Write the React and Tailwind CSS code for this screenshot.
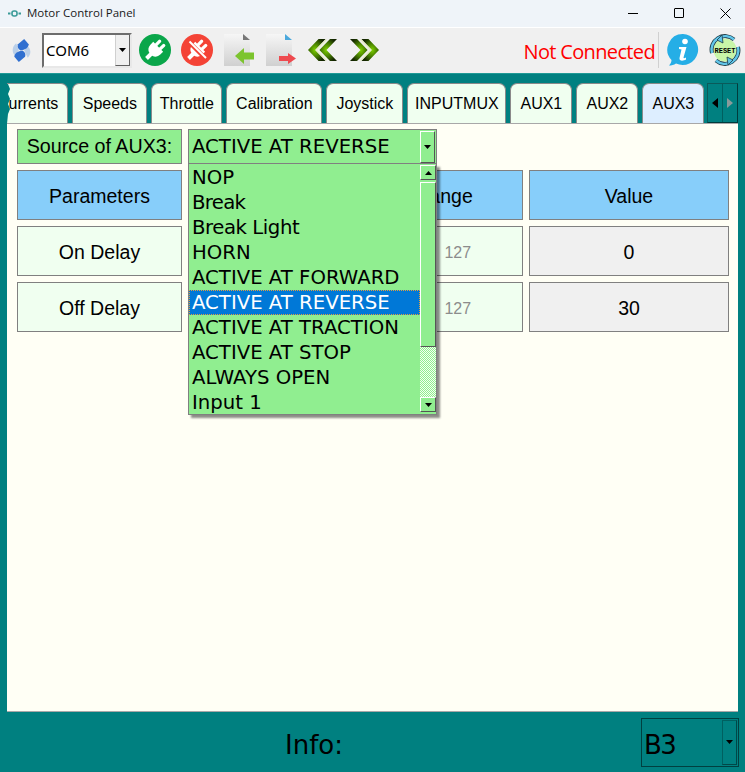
import React from 'react';

const OPTIONS = [
  { label: 'NOP' },
  { label: 'Break', tight: 'tracking-[-0.7px]' },
  { label: 'Break Light', tight: 'tracking-[-0.45px]' },
  { label: 'HORN' },
  { label: 'ACTIVE AT FORWARD' },
  { label: 'ACTIVE AT REVERSE', selected: true },
  { label: 'ACTIVE AT TRACTION' },
  { label: 'ACTIVE AT STOP' },
  { label: 'ALWAYS OPEN' },
  { label: 'Input 1' },
];

const TABS = [
  { name: 'Speeds', w: 'w-[75px]' },
  { name: 'Throttle', w: 'w-[71px]' },
  { name: 'Calibration', w: 'w-[96px]' },
  { name: 'Joystick', w: 'w-[77px]' },
  { name: 'INPUTMUX', w: 'w-[99px]' },
  { name: 'AUX1', w: 'w-[62px]' },
  { name: 'AUX2', w: 'w-[62px]' },
];

function Arrow({ up }) {
  return (
    <svg width="7" height="4" viewBox="0 0 7 4">
      <path d={up ? 'M3.5 0 L7 4 L0 4 Z' : 'M0 0 L7 0 L3.5 4 Z'} fill="#000" />
    </svg>
  );
}

function TitleIcon() {
  return (
    <svg width="13" height="7" viewBox="0 0 13 7" fill="none">
      <rect x="4" y="1" width="5" height="5" rx="2" stroke="#3a9a98" strokeWidth="1.6" />
      <rect x="0" y="2.5" width="2.5" height="2" fill="#3a9a98" />
      <rect x="10.5" y="2.5" width="2.5" height="2" fill="#3a9a98" />
    </svg>
  );
}

function Logo() {
  return (
    <svg width="21" height="25" viewBox="0 0 22 28">
      <path d="M5 6 C0 10 0 17 4 20 L8 14 Z" fill="#b9cfe9" />
      <path d="M17 8 C22 12 22 18 18 22 L14 14 Z" fill="#b9cfe9" />
      <path d="M14 1 L19 7 C19 11 15 13 10 14 C7 12 6 10 7 7 Z" fill="#2f6fd0" />
      <path d="M8 27 L3 21 C3 17 7 15 12 14 C15 16 16 18 15 21 Z" fill="#2f6fd0" />
    </svg>
  );
}

function PlugShape() {
  return (
    <g fill="#fff" transform="rotate(45 16 16)">
      <rect x="11.5" y="5" width="3.2" height="8" rx="1.4" />
      <rect x="17.3" y="5" width="3.2" height="8" rx="1.4" />
      <path d="M9 11.5 H23 V15.5 A7 7 0 0 1 18 22 V28 H14 V22 A7 7 0 0 1 9 15.5 Z" />
    </g>
  );
}

function PlugOn() {
  return (
    <svg width="32" height="32" viewBox="0 0 32 32">
      <circle cx="16" cy="16" r="16" fill="#0aa64a" />
      <PlugShape />
    </svg>
  );
}

function PlugOff() {
  return (
    <svg width="32" height="32" viewBox="0 0 32 32">
      <circle cx="16" cy="16" r="16" fill="#f44336" />
      <PlugShape />
      <path d="M8 8 L25 25" stroke="#f44336" strokeWidth="4.5" />
      <path d="M8.5 7.5 L25 24" stroke="#fff" strokeWidth="2" />
    </svg>
  );
}

function DocIcon({ id, corner, arrow }) {
  const isIn = id === 'in';
  return (
    <svg width="31" height="33" viewBox="0 0 31 33">
      <defs>
        <linearGradient id={`doc-${id}`} x1="0" y1="0" x2="0" y2="1">
          <stop offset="0" stopColor="#f6f6f6" />
          <stop offset="1" stopColor="#d0d0d0" />
        </linearGradient>
      </defs>
      <path d="M0 0 H19 L26 7 V32 H0 Z" fill={`url(#doc-${id})`} />
      <path d="M19 0 L26 6 H19 Z" fill={corner} />
      {isIn ? (
        <path d="M11 22 L20 14 V18.5 H30 V25.5 H20 V30 Z" fill={arrow} />
      ) : (
        <path d="M30 24.5 L22 19 V22 H13 V27 H22 V30 Z" fill={arrow} />
      )}
    </svg>
  );
}

function Chevrons({ id, flip }) {
  return (
    <svg width="29" height="22" viewBox="0 0 33 22" preserveAspectRatio="none" className={flip ? '-scale-x-100' : ''}>
      <defs>
        <radialGradient id={id} cx="0.4" cy="0.5" r="0.6">
          <stop offset="0" stopColor="#7fd000" />
          <stop offset="0.5" stopColor="#477f00" />
          <stop offset="1" stopColor="#142600" />
        </radialGradient>
      </defs>
      <path d="M0 11 L12 0 H20 L8 11 L20 22 H12 Z" fill={`url(#${id})`} />
      <path d="M13 11 L25 0 H33 L21 11 L33 22 H25 Z" fill={`url(#${id})`} />
      <path d="M9.5 11 L21 0.5 M9.5 11 L21 21.5" stroke="#e8eec0" strokeWidth="1.2" fill="none" />
    </svg>
  );
}

function InfoIcon() {
  return (
    <svg width="32" height="32" viewBox="0 0 32 32">
      <path d="M16 0 A15.5 15.5 0 1 1 9 29.5 C7 31 4.5 31.5 2 31.5 C3.5 30 4.5 28 4.5 26 A15.5 15.5 0 0 1 16 0 Z" fill="#25aee6" />
      <circle cx="18" cy="7.5" r="2.8" fill="#fff" />
      <path d="M12 13 H19.5 L16.5 23.5 C16.3 24.5 17.5 24.5 19 23.5 L19 25.5 C16.5 27 12 27.5 12.5 24 L14.5 15.5 L12 15 Z" fill="#fff" />
    </svg>
  );
}

function ResetIcon() {
  return (
    <svg width="32" height="32" viewBox="0 0 32 32">
      <circle cx="16" cy="16" r="11.5" fill="#c8f5a8" />
      <path d="M3 19 A13.5 13.5 0 0 1 25 5.5" fill="none" stroke="#1c3a44" strokeWidth="4" />
      <path d="M29 13 A13.5 13.5 0 0 1 7 26.5" fill="none" stroke="#1c3a44" strokeWidth="4" />
      <path d="M3 19 A13.5 13.5 0 0 1 25 5.5" fill="none" stroke="#62c6ea" strokeWidth="2.4" />
      <path d="M29 13 A13.5 13.5 0 0 1 7 26.5" fill="none" stroke="#62c6ea" strokeWidth="2.4" />
      <path d="M13 1 L8 6 L14 9 Z" fill="#62c6ea" stroke="#1c3a44" strokeWidth="0.8" />
      <path d="M19 31 L24 26 L18 23 Z" fill="#62c6ea" stroke="#1c3a44" strokeWidth="0.8" />
      <text x="16" y="18.5" textAnchor="middle" fontSize="7" fontWeight="700" fontFamily="Liberation Mono, monospace" fill="#000">RESET</text>
    </svg>
  );
}

function Cell({ className = '', children }) {
  return (
    <div className={`h-[50px] pt-[4px] border border-[#808080] flex items-center justify-center ${className}`}>
      {children}
    </div>
  );
}

export default function App() {
  return (
    <div className="w-[745px] h-[772px] flex flex-col overflow-hidden bg-[#008080] font-['Liberation_Sans',sans-serif]">
      {/* Title bar */}
      <div className="h-[27px] pb-px bg-[#eff4f9] flex items-center shrink-0">
        <div className="ml-[8px] w-[19px] flex"><TitleIcon /></div>
        <span className="text-[11.5px] text-[#1a1a1a] font-['Open_Sans',sans-serif]">Motor Control Panel</span>
        <div className="ml-auto -mr-[3px] flex items-center h-full">
          <div className="w-[46px] flex justify-center"><div className="w-[10px] h-px bg-black" /></div>
          <div className="w-[46px] flex justify-center"><div className="w-[10px] h-[10px] border border-black rounded-[1px]" /></div>
          <div className="w-[46px] flex justify-center">
            <svg width="11" height="11" viewBox="0 0 11 11"><path d="M0.5 0.5 L10.5 10.5 M10.5 0.5 L0.5 10.5" stroke="#000" /></svg>
          </div>
        </div>
      </div>

      {/* Toolbar */}
      <div className="h-[46px] pb-px bg-[#f0f0f0] border-t border-white flex items-center shrink-0">
        <div className="ml-[11px] flex"><Logo /></div>
        <div className="ml-[10px] w-[90px] h-[35px] bg-white border-2 border-[#6d6d6d] border-r-[#e8e8e8] border-b-[#e8e8e8] flex items-center justify-between">
          <span className="ml-[2px] text-[15px] text-black font-['Noto_Sans',sans-serif]">COM6</span>
          <div className="w-[15px] h-full bg-[#f0f0f0] border-l border-[#d0d0d0] border-r border-r-[#606060] border-b border-b-[#606060] flex items-center justify-center"><Arrow /></div>
        </div>
        <div className="ml-[7px] flex"><PlugOn /></div>
        <div className="ml-[10px] flex"><PlugOff /></div>
        <div className="ml-[11px] flex"><DocIcon id="in" corner="#777" arrow="#7cc42e" /></div>
        <div className="ml-[11px] flex"><DocIcon id="out" corner="#4aa8dc" arrow="#ee4a4f" /></div>
        <div className="ml-[11px] flex"><Chevrons id="chev-l" /></div>
        <div className="ml-[13px] flex"><Chevrons id="chev-r" flip /></div>
        <span className="ml-auto pt-[3px] mr-px text-[20px] text-[#ff0000] font-['Open_Sans',sans-serif] tracking-[-0.65px]">Not Connected</span>
        <div className="ml-[2px] w-px h-[36px] bg-[#d0d0d0]" />
        <div className="ml-[8px] flex"><InfoIcon /></div>
        <div className="ml-[10px] mr-[4px] flex"><ResetIcon /></div>
      </div>

      {/* Tabs */}
      <div className="pt-[9px] px-[7px] flex shrink-0 h-[50px] border-t border-[#1f9a96]">
        <div className="relative w-[62px] h-[40px] bg-[#f0fff0] border-t border-r border-[#8a8a8a] rounded-tr-[7px] overflow-hidden flex items-center justify-end pr-[9px] text-[16px] text-black">
          <span className="whitespace-nowrap">Currents</span>
          <svg width="3" height="40" viewBox="0 0 3 40" className="absolute left-0 top-0">
            <path d="M0 0 H1 L3 5 L1 10 L3 15 L1 20 L3 25 L1 30 L0 40 Z" fill="#008080" />
          </svg>
        </div>
        <div className="flex ml-[4px] gap-[4px]">
          {TABS.map(t => (
            <div key={t.name} className={`${t.w} h-[40px] bg-[#f0fff0] border border-b-0 border-[#8a8a8a] rounded-t-[7px] flex items-center justify-center text-[16px] text-black`}>
              {t.name}
            </div>
          ))}
          <div className="w-[62px] h-[40px] bg-[#ddeeff] border border-b-0 border-[#8a8a8a] rounded-t-[7px] flex items-center justify-center text-[16px] text-black">
            AUX3
          </div>
        </div>
        <div className="ml-[3px] h-[40px] w-[31px] flex border-t border-l border-[#0a5a5a] border-r border-r-[#003c3c] border-b border-b-[#003c3c]">
          <div className="flex-1 flex items-center justify-center border-r border-[#005f5f]">
            <svg width="6" height="10" viewBox="0 0 6 10"><path d="M6 0 V10 L0 5 Z" fill="#000" /></svg>
          </div>
          <div className="flex-1 flex items-center justify-center">
            <svg width="6" height="10" viewBox="0 0 6 10"><path d="M0 0 V10 L6 5 Z" fill="#8a9a9a" /></svg>
          </div>
        </div>
      </div>

      {/* Panel */}
      <div className="relative mx-[7px] w-[731px] h-[589px] shrink-0 bg-[#fffff5] border-t border-b border-[#a8a8a8] pt-[5px] pl-[10px]">
        <div className="w-[165px] h-[35px] bg-[#90ee90] border border-[#808080] flex items-center justify-center text-[19.7px] text-black">
          Source of AUX3:
        </div>
        <div className="mt-[6px] grid grid-cols-[165px_171px_158px_200px] gap-[6px] text-[19.5px] text-black">
          <Cell className="bg-[#87cefa]">Parameters</Cell>
          <Cell className="bg-[#87cefa]" />
          <Cell className="bg-[#87cefa]">Range</Cell>
          <Cell className="bg-[#87cefa]">Value</Cell>

          <Cell className="bg-[#f0fff0]">On Delay</Cell>
          <Cell className="bg-[#f0fff0]" />
          <Cell className="bg-[#f0fff0] text-[16px] text-[#8c8c8c]">0 -{'\u00a0\u00a0'}127</Cell>
          <Cell className="bg-[#f0f0f0]">0</Cell>

          <Cell className="bg-[#f0fff0]">Off Delay</Cell>
          <Cell className="bg-[#f0fff0]" />
          <Cell className="bg-[#f0fff0] text-[16px] text-[#8c8c8c]">0 -{'\u00a0\u00a0'}127</Cell>
          <Cell className="bg-[#f0f0f0]">30</Cell>
        </div>

        {/* Open combo box */}
        <div className="absolute left-[181px] top-[5px] w-[249px] font-['DejaVu_Sans',sans-serif] text-[19.7px] text-black">
          <div className="h-[35px] bg-[#90ee90] border border-[#808080] flex items-center justify-between">
            <span className="ml-[3px] whitespace-nowrap">ACTIVE AT REVERSE</span>
            <div className="mr-px w-[15px] h-[32px] bg-[#90ee90] border-l border-t border-white border-r border-r-[#555] border-b border-b-[#555] flex items-center justify-center"><Arrow /></div>
          </div>
          <div className="h-[251px] bg-[#90ee90] border border-t-0 border-[#808080] shadow-[3px_3px_2px_rgba(0,0,0,0.45)] flex">
            <div className="w-[231px] pt-px">
              {OPTIONS.map(o => (
                <div
                  key={o.label}
                  className={o.selected
                    ? 'h-[25px] pl-[3px] flex items-center whitespace-nowrap bg-[#0078d7] text-white outline-1 outline-dotted outline-[#e0a040] -outline-offset-1'
                    : `h-[25px] pl-[3px] flex items-center whitespace-nowrap ${o.tight || ''}`}
                >
                  {o.label}
                </div>
              ))}
            </div>
            <div className="flex-1 flex flex-col pt-px">
              <div className="h-[15px] border-l border-t border-white border-r border-r-[#555] border-b border-b-[#555] flex items-center justify-center"><Arrow up /></div>
              <div className="mt-[2px] h-[165px] border-l border-t border-white border-r border-r-[#555] border-b border-b-[#555]" />
              <div className="h-[50px] bg-[repeating-conic-gradient(#90ee90_0_25%,#f4fff0_0_50%)] bg-[length:2px_2px]" />
              <div className="h-[15px] border-l border-t border-white border-r border-r-[#555] border-b border-b-[#555] flex items-center justify-center"><Arrow /></div>
            </div>
          </div>
        </div>
      </div>

      {/* Footer */}
      <div className="flex-1 flex items-center font-['DejaVu_Sans',sans-serif] text-black">
        <span className="ml-[285px] pt-[6px] text-[26px]">Info:</span>
        <div className="ml-auto mr-[6px] w-[98px] h-[49px] border border-[#004040] flex items-center justify-between">
          <span className="ml-[2px] pt-[7px] text-[26px] tracking-[-1.5px]">B3</span>
          <div className="w-[15px] h-[45px] mr-px border border-[#006060] border-r-[#004848] border-b-[#004848] flex items-center justify-center">
            <svg width="7" height="4" viewBox="0 0 7 4"><path d="M0 0 H7 L3.5 4 Z" fill="#000" /></svg>
          </div>
        </div>
      </div>
    </div>
  );
}
